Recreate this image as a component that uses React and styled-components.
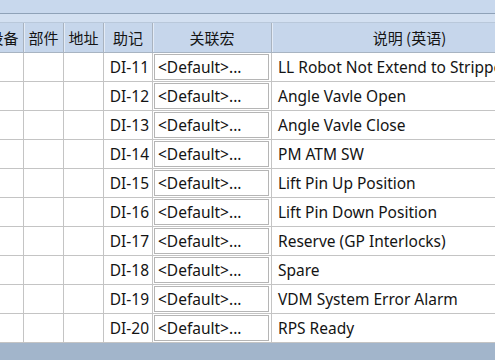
import React from "react";
import styled, { createGlobalStyle } from "styled-components";

const GlobalStyle = createGlobalStyle`
  html, body {
    margin: 0;
    padding: 0;
    width: 495px;
    height: 360px;
    overflow: hidden;
    background: #ffffff;
  }
`;

const rows = [
  ["DI-11", "LL Robot Not Extend to Stripper"],
  ["DI-12", "Angle Vavle Open"],
  ["DI-13", "Angle Vavle Close"],
  ["DI-14", "PM ATM SW"],
  ["DI-15", "Lift Pin Up Position"],
  ["DI-16", "Lift Pin Down Position"],
  ["DI-17", "Reserve (GP Interlocks)"],
  ["DI-18", "Spare"],
  ["DI-19", "VDM System Error Alarm"],
  ["DI-20", "RPS Ready"],
];

const cols = "40px 40px 40px 49px 119px 276px";

const App = () => {
  return (
    <Screen>
      <GlobalStyle />
      <TopBar />
      <Gap />
      <Grid>
        <HeaderRow>
          <HeadCell>设备</HeadCell>
          <HeadCell>部件</HeadCell>
          <HeadCell>地址</HeadCell>
          <HeadCell>助记</HeadCell>
          <HeadCell>关联宏</HeadCell>
          <HeadCell>说明 (英语)</HeadCell>
        </HeaderRow>
        {rows.map(([tag, desc]) => (
          <Row key={tag}>
            <Cell />
            <Cell />
            <Cell />
            <Cell align="right">{tag}</Cell>
            <MacroCell>
              <MacroBox>&lt;Default&gt;...</MacroBox>
            </MacroCell>
            <Cell>{desc}</Cell>
          </Row>
        ))}
      </Grid>
      <BottomBar />
    </Screen>
  );
};

export default App;

const Screen = styled.div`
  width: 495px;
  height: 360px;
  display: flex;
  flex-direction: column;
  overflow: hidden;
  background: #ffffff;
  font-family: "Noto Sans", "Noto Sans CJK SC", sans-serif;
  font-size: 15.5px;
  color: #141414;
`;

const TopBar = styled.div`
  height: 13px;
  flex: none;
  background: #c8d8ed;
  border-bottom: 1px solid #8fa2b8;
`;

const Gap = styled.div`
  height: 8px;
  flex: none;
  background: #d3e0f1;
`;

const Grid = styled.div`
  flex: 1;
  margin-left: -16px;
  display: flex;
  flex-direction: column;
`;

const HeaderRow = styled.div`
  display: grid;
  grid-template-columns: ${cols};
  height: 29px;
  flex: none;
  background: #c6d6eb;
  border-top: 1px solid #b9c8da;
  border-bottom: 1px solid #a8b4c2;
`;

const HeadCell = styled.div`
  display: flex;
  align-items: center;
  justify-content: center;
  border-right: 1px solid #a9b3bf;
  box-shadow: inset 1px 0 0 #e3ebf6;
  font-family: "Noto Sans CJK SC", sans-serif;
  font-size: 15px;
  white-space: nowrap;
  overflow: hidden;
`;

const Row = styled.div`
  display: grid;
  grid-template-columns: ${cols};
  height: 29px;
  flex: none;
  box-sizing: border-box;
  border-bottom: 1px solid #c4c4c4;
`;

const Cell = styled.div`
  display: flex;
  align-items: center;
  justify-content: ${(p) => (p.align === "right" ? "flex-end" : "flex-start")};
  padding: 0 ${(p) => (p.align === "right" ? "3px" : "6px")};
  border-right: 1px solid #c4c4c4;
  white-space: nowrap;
  overflow: hidden;
`;

const MacroCell = styled.div`
  display: flex;
  align-items: stretch;
  padding: 1px 2px 1px 1px;
  border-right: 1px solid #c4c4c4;
  overflow: hidden;
`;

const MacroBox = styled.div`
  flex: 1;
  display: flex;
  align-items: center;
  padding: 0 3px;
  border: 1px solid #b5b5b5;
  background: #ffffff;
  white-space: nowrap;
  overflow: hidden;
`;

const BottomBar = styled.div`
  height: 19px;
  flex: none;
  background: #a2b5cb;
`;
